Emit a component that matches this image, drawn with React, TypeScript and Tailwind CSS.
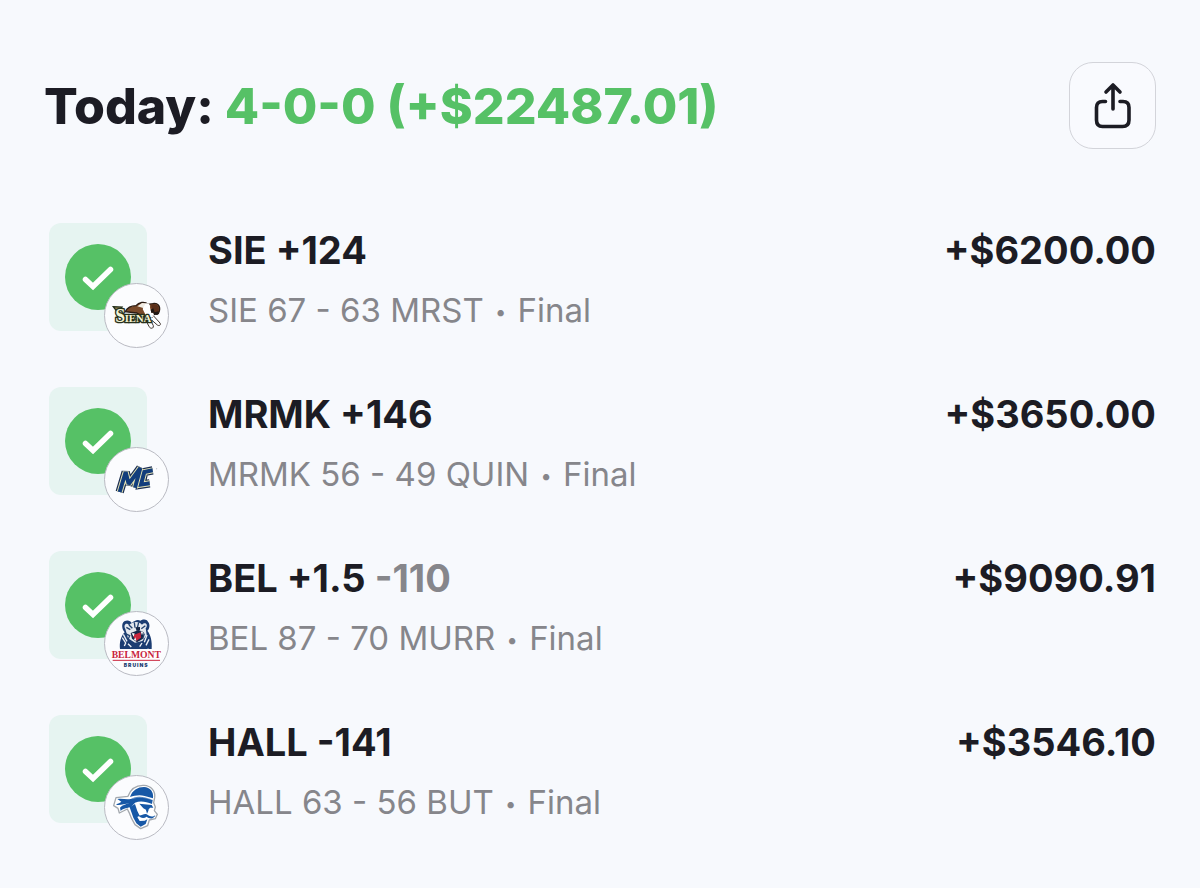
import type { ReactNode } from 'react'

const SienaLogo = () => (
  <svg viewBox="15 11 189 189" className="size-full" role="img" aria-label="Siena">
    <path
      d="M76 94 C82 82 94 76 108 76 C116 66 134 62 144 72 L158 70 C172 66 182 76 178 92 C176 102 168 104 164 98 L158 110 L132 110 L110 98 Z"
      fill="#7a4a2a"
      stroke="#2a1c14"
      strokeWidth="4"
    />
    <path d="M112 78 L126 68 L138 69 L132 84 Z" fill="#f2ede4" />
    <path d="M136 70 C144 66 152 72 150 82 L154 96 L166 102 L156 112 L138 106 L128 86 Z" fill="#fff" />
    <path d="M154 72 C168 68 180 78 176 92 L166 96 C158 90 152 84 154 72 Z" fill="#5a2f19" />
    <path d="M152 88 L160 84 L164 96 L154 98 Z M160 97 L176 92 L173 103 L162 104 Z" fill="#1f1713" />
    <path
      d="M146 108 L160 136 C162 146 150 146 147 138 L138 122 M160 106 L180 128 C184 134 178 138 172 134 L156 120"
      fill="#fff"
      stroke="#41362f"
      strokeWidth="3"
      strokeLinejoin="round"
    />
    <path d="M40 79 L66 80 L60 89 L48 90 Z" fill="#8d8250" stroke="#26311d" strokeWidth="4" />
    <g
      fill="#f5f3d4"
      stroke="#26311d"
      strokeWidth="8"
      paintOrder="stroke"
      strokeLinejoin="round"
      fontFamily="Liberation Serif, serif"
      fontWeight="700"
    >
      <text x="46" y="125" fontSize="54">
        S
      </text>
      <text x="74" y="125" fontSize="32">
        IENA
      </text>
    </g>
  </svg>
)

const MERRIMACK_M = 'M59 143 L77 83 L86 119 L121 71 L105 130'
const MERRIMACK_C = 'M158 78 L133 83 L123 121 L149 117'

const MerrimackLogo = () => (
  <svg viewBox="15 11 189 189" className="size-full" role="img" aria-label="Merrimack">
    <g fill="none" strokeLinejoin="miter" strokeMiterlimit="2">
      <path d={MERRIMACK_M} stroke="#1b2e52" strokeWidth="25" />
      <path d={MERRIMACK_C} stroke="#1b2e52" strokeWidth="25" />
      <path d={MERRIMACK_M} stroke="#e4e2b4" strokeWidth="18" />
      <path d={MERRIMACK_C} stroke="#e4e2b4" strokeWidth="18" />
      <path d={MERRIMACK_M} stroke="#123d7c" strokeWidth="12" />
      <path d={MERRIMACK_C} stroke="#123d7c" strokeWidth="12" />
    </g>
    <circle cx="170" cy="73" r="1.5" fill="#9aa0a8" />
  </svg>
)

const BelmontLogo = () => (
  <svg viewBox="15 11 189 189" className="size-full" role="img" aria-label="Belmont Bruins">
    <path
      d="M60 122 C58 104 62 84 74 72 C66 64 63 46 73 39 C83 33 92 38 95 44 C103 38 112 32 121 37 C128 32 140 31 144 40 C151 48 149 61 142 67 C152 79 157 99 155 122 Z"
      fill="#1c3d72"
    />
    <path
      d="M76 62 C69 50 79 40 87 51 C99 39 116 38 126 49 C136 38 146 49 137 60 L140 80 L127 98 L105 103 L84 90 Z"
      fill="#e4e8ee"
    />
    <path
      d="M79 57 L91 64 M87 50 L97 60 M103 42 L105 58 M116 42 L112 59 M136 52 L124 61 M76 76 L89 82 L84 94 M133 76 L128 92"
      fill="none"
      stroke="#23436f"
      strokeWidth="4"
    />
    <path d="M92 74 L116 65 L131 72 L128 92 L111 102 L96 91 Z" fill="#162849" />
    <path d="M100 80 L122 72 L123 88 L110 97 L101 87 Z" fill="#c9253d" />
    <path d="M95 75 L101 85 L104 75 Z M122 69 L126 81 L129 72 Z M102 94 L106 87 L109 98 Z" fill="#fff" />
    <path d="M106 57 L120 56 L120 65 L110 68 Z" fill="#152747" />
    <path
      d="M67 88 L77 104 L73 113 M70 78 L81 99 M141 80 L133 102 M147 93 L138 111 M84 106 L94 116 M126 104 L119 115"
      fill="none"
      stroke="#eef1f5"
      strokeWidth="4"
    />
    <text
      x="109"
      y="150"
      textAnchor="middle"
      fontFamily="Liberation Serif, serif"
      fontWeight="700"
      fontSize="29"
      fill="#c9253d"
      stroke="#fff"
      strokeWidth="8"
      paintOrder="stroke"
    >
      BELMONT
    </text>
    <path d="M38 156 H180" stroke="#c9253d" strokeWidth="3" />
    <text
      x="107"
      y="175"
      textAnchor="middle"
      fontFamily="Inter, sans-serif"
      fontWeight="900"
      fontSize="15"
      fill="#1c3d72"
    >
      B R U I N S
    </text>
  </svg>
)

const SetonHallLogo = () => (
  <svg viewBox="15 11 189 189" className="size-full" role="img" aria-label="Seton Hall">
    <path
      d="M84 72 C92 49 110 38 132 39 C153 40 167 56 164 76 L161 91 L166 104 L163 115 L172 126 L166 139 L148 143 L143 160 L122 169 L105 157 L95 139 L87 120 L82 110 L58 122 L54 108 L41 100 L48 76 Z"
      fill="#fff"
      stroke="#a3a8ae"
      strokeWidth="4"
      strokeLinejoin="round"
    />
    <path d="M90 74 C97 54 113 44 132 44 C150 45 162 58 159 78 L134 71 C118 67 104 70 90 74 Z" fill="#1758a6" />
    <path
      d="M52 80 C70 77 86 85 101 76 C119 69 141 76 158 83 L156 95 C139 88 121 84 105 91 L94 103 C84 107 69 107 62 116 L60 106 C68 97 80 96 87 92 C74 96 58 99 48 97 C54 93 61 91 64 88 Z"
      fill="#1758a6"
    />
    <path d="M98 79 C116 71 138 76 156 82" fill="none" stroke="#fff" strokeWidth="1" />
    <path
      d="M89 105 L105 95 L112 116 L119 130 L112 134 L119 146 L134 145 L142 141 L137 155 L122 163 L109 153 L100 136 Z"
      fill="#1758a6"
    />
    <path d="M118 94 L155 98 L160 106 L150 106 L143 115 L130 108 Z M138 113 L146 114 L141 124 Z" fill="#1758a6" />
    <path
      d="M115 129 C124 132 132 122 140 126 C147 130 155 137 166 129 C161 142 147 139 140 133 C132 139 121 138 115 129 Z"
      fill="#1758a6"
    />
  </svg>
)

type Bet = {
  id: string
  pick: string
  odds?: string
  score: string
  profit: string
  logo: ReactNode
}

const bets: Bet[] = [
  {
    id: 'siena',
    pick: 'SIE +124',
    score: 'SIE 67 - 63 MRST',
    profit: '+$6200.00',
    logo: <SienaLogo />,
  },
  {
    id: 'merrimack',
    pick: 'MRMK +146',
    score: 'MRMK 56 - 49 QUIN',
    profit: '+$3650.00',
    logo: <MerrimackLogo />,
  },
  {
    id: 'belmont',
    pick: 'BEL +1.5',
    odds: '-110',
    score: 'BEL 87 - 70 MURR',
    profit: '+$9090.91',
    logo: <BelmontLogo />,
  },
  {
    id: 'seton-hall',
    pick: 'HALL -141',
    score: 'HALL 63 - 56 BUT',
    profit: '+$3546.10',
    logo: <SetonHallLogo />,
  },
]

const BetRow = ({ bet }: { bet: Bet }) => {
  return (
    <li className="flex items-start">
      <div className="relative mr-[61px] mb-[17px] flex h-[108px] w-[98px] shrink-0 items-center justify-center rounded-xl bg-[#e6f4f1]">
        <svg viewBox="0 0 66 66" className="size-[66px]" role="img" aria-label="Won">
          <circle cx="33" cy="33" r="33" fill="#56c166" />
          <path
            d="M20.5 35.5 L28 42.5 L45.5 25.5"
            fill="none"
            stroke="#fff"
            strokeWidth="5.5"
            strokeLinecap="round"
          />
        </svg>
        <div className="absolute top-[60px] left-[55px] size-[65px] overflow-hidden rounded-full border border-[#babbc3] bg-[#fbfcfe]">
          {bet.logo}
        </div>
      </div>
      <div className="min-w-0 flex-1 pt-1">
        <div className="text-[38px] leading-[46px] font-bold">
          {bet.pick}
          {bet.odds && <span className="text-[#86868b]"> {bet.odds}</span>}
        </div>
        <div className="mt-[17px] text-[33px] leading-10 text-[#86868b]">
          {bet.score} <span className="px-[2px] align-[3px] text-xl">•</span> Final
        </div>
      </div>
      <div className="pt-1 text-[38px] leading-[46px] font-bold">{bet.profit}</div>
    </li>
  )
}

const App = () => {
  return (
    <main className="min-h-screen bg-[#f7f9fd] px-11 pt-[62px] pb-12 font-[Inter,sans-serif] text-[#1c1c24]">
      <header className="flex items-center justify-between">
        <h1 className="text-[50px] leading-[60px] font-extrabold">
          Today: <span className="text-[#56c166]">4-0-0 (+$22487.01)</span>
        </h1>
        <button
          type="button"
          aria-label="Share"
          className="flex size-[87px] items-center justify-center rounded-3xl border border-[#d3d4da] bg-[#f9fafe]"
        >
          <svg
            viewBox="0 0 38 48"
            className="h-12 w-[38px]"
            fill="none"
            stroke="currentColor"
            strokeWidth="3.6"
            strokeLinecap="round"
            strokeLinejoin="round"
          >
            <path d="M11.5 19.5 H8.5 Q2.5 19.5 2.5 25.5 V38 Q2.5 44.5 8.5 44.5 H28.5 Q35 44.5 35 38 V25.5 Q35 19.5 29 19.5 H26" />
            <path d="M19 27 V3 M12 10 L19 3 L26 10" />
          </svg>
        </button>
      </header>
      <ul className="mt-[74px] flex flex-col gap-[39px] pl-[5px]">
        {bets.map((bet) => (
          <BetRow key={bet.id} bet={bet} />
        ))}
      </ul>
    </main>
  )
}

export default App
